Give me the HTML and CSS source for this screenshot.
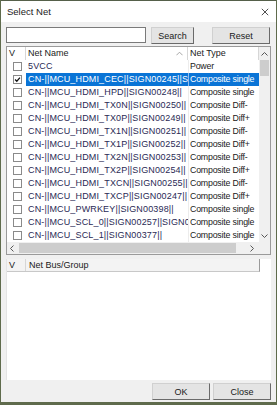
FILE: index.html
```html
<!DOCTYPE html>
<html lang="en">
<head>
    <meta charset="UTF-8">
    <title>Select Net</title>
    <link rel="stylesheet" href="styles.css">
</head>
<body>
    <div class="dialog">
        <div class="titlebar">
            <span class="title">Select Net</span>
            <svg class="close-icon" viewBox="0 0 10 10" fill="none" stroke="#222" stroke-width="1">
                <path d="M1 1L9 9M9 1L1 9"/>
            </svg>
        </div>

        <div class="content">
            <div class="search-row">
                <input class="search-input" type="text">
                <button class="btn btn-search">Search</button>
                <button class="btn btn-wide">Reset</button>
            </div>

            <div class="grid">
                <div class="grid-main">
                    <div class="grid-view">
                        <div class="grid-head">
                            <div class="col-v">V</div>
                            <div class="col-name">Net Name
                                <svg class="sort-icon" viewBox="0 0 8 5" fill="none" stroke="#9a9a9a" stroke-width="1">
                                    <path d="M0.5 4.5L4 1L7.5 4.5"/>
                                </svg>
                            </div>
                            <div class="col-type">Net Type</div>
                        </div>
                        <div class="grid-rows">
                            <div class="row">
                                <div class="col-v"><span class="check"></span></div>
                                <div class="col-name">5VCC</div>
                                <div class="col-type">Power</div>
                            </div>
                            <div class="row selected">
                                <div class="col-v"><span class="check checked">
                                    <svg viewBox="0 0 8 8" fill="none" stroke="#111" stroke-width="1.4"><path d="M1.2 4L3.2 6L6.8 1.8"/></svg>
                                </span></div>
                                <div class="col-name">CN-||MCU_HDMI_CEC||SIGN00245||SIGN00246||</div>
                                <div class="col-type">Composite single</div>
                            </div>
                            <div class="row">
                                <div class="col-v"><span class="check"></span></div>
                                <div class="col-name">CN-||MCU_HDMI_HPD||SIGN00248||</div>
                                <div class="col-type">Composite single</div>
                            </div>
                            <div class="row">
                                <div class="col-v"><span class="check"></span></div>
                                <div class="col-name">CN-||MCU_HDMI_TX0N||SIGN00250||</div>
                                <div class="col-type">Composite Diff-</div>
                            </div>
                            <div class="row">
                                <div class="col-v"><span class="check"></span></div>
                                <div class="col-name">CN-||MCU_HDMI_TX0P||SIGN00249||</div>
                                <div class="col-type">Composite Diff+</div>
                            </div>
                            <div class="row">
                                <div class="col-v"><span class="check"></span></div>
                                <div class="col-name">CN-||MCU_HDMI_TX1N||SIGN00251||</div>
                                <div class="col-type">Composite Diff-</div>
                            </div>
                            <div class="row">
                                <div class="col-v"><span class="check"></span></div>
                                <div class="col-name">CN-||MCU_HDMI_TX1P||SIGN00252||</div>
                                <div class="col-type">Composite Diff+</div>
                            </div>
                            <div class="row">
                                <div class="col-v"><span class="check"></span></div>
                                <div class="col-name">CN-||MCU_HDMI_TX2N||SIGN00253||</div>
                                <div class="col-type">Composite Diff-</div>
                            </div>
                            <div class="row">
                                <div class="col-v"><span class="check"></span></div>
                                <div class="col-name">CN-||MCU_HDMI_TX2P||SIGN00254||</div>
                                <div class="col-type">Composite Diff+</div>
                            </div>
                            <div class="row">
                                <div class="col-v"><span class="check"></span></div>
                                <div class="col-name">CN-||MCU_HDMI_TXCN||SIGN00255||</div>
                                <div class="col-type">Composite Diff-</div>
                            </div>
                            <div class="row">
                                <div class="col-v"><span class="check"></span></div>
                                <div class="col-name">CN-||MCU_HDMI_TXCP||SIGN00247||</div>
                                <div class="col-type">Composite Diff+</div>
                            </div>
                            <div class="row">
                                <div class="col-v"><span class="check"></span></div>
                                <div class="col-name">CN-||MCU_PWRKEY||SIGN00398||</div>
                                <div class="col-type">Composite single</div>
                            </div>
                            <div class="row">
                                <div class="col-v"><span class="check"></span></div>
                                <div class="col-name">CN-||MCU_SCL_0||SIGN00257||SIGN00378||</div>
                                <div class="col-type">Composite single</div>
                            </div>
                            <div class="row">
                                <div class="col-v"><span class="check"></span></div>
                                <div class="col-name">CN-||MCU_SCL_1||SIGN00377||</div>
                                <div class="col-type">Composite single</div>
                            </div>
                        </div>
                    </div>
                    <div class="vscroll">
                        <svg class="arrow" viewBox="0 0 7 4" fill="none" stroke="#555" stroke-width="1"><path d="M0.5 3.5L3.5 0.5L6.5 3.5"/></svg>
                        <div class="vthumb"></div>
                        <div class="spacer"></div>
                        <svg class="arrow" viewBox="0 0 7 4" fill="none" stroke="#555" stroke-width="1"><path d="M0.5 0.5L3.5 3.5L6.5 0.5"/></svg>
                    </div>
                </div>
                <div class="hscroll">
                    <svg class="harrow" viewBox="0 0 4 7" fill="none" stroke="#555" stroke-width="1"><path d="M3.5 0.5L0.5 3.5L3.5 6.5"/></svg>
                    <div class="hthumb"></div>
                    <svg class="harrow" viewBox="0 0 4 7" fill="none" stroke="#555" stroke-width="1"><path d="M0.5 0.5L3.5 3.5L0.5 6.5"/></svg>
                    <div class="corner"></div>
                </div>
            </div>

            <div class="group-list">
                <div class="group-head">
                    <div class="col-v">V</div>
                    <div class="col-group">Net Bus/Group</div>
                </div>
            </div>

            <div class="footer">
                <button class="btn btn-wide">OK</button>
                <button class="btn btn-wide">Close</button>
            </div>
        </div>
    </div>
</body>
</html>
```

FILE: styles.css
```css
* {
    margin: 0;
    padding: 0;
    box-sizing: border-box;
}

body {
    background: #5f6b4c;
    font-family: "Liberation Sans", Arial, sans-serif;
    font-size: 9px;
    color: #1a1a1a;
    width: 277px;
    height: 405px;
    overflow: hidden;
}

.dialog {
    width: 275px;
    height: 402px;
    margin-left: 1px;
    background: #f0f0f0;
    border-top: 1px solid #55604a;
    display: flex;
    flex-direction: column;
}

.titlebar {
    height: 21px;
    background: #ffffff;
    display: flex;
    align-items: center;
    justify-content: space-between;
    padding: 0 7px 0 6px;
}

.title {
    font-size: 9.5px;
    color: #222;
}

.close-icon {
    width: 8px;
    height: 8px;
}

.content {
    padding: 5px 5px 0 5px;
    display: flex;
    flex-direction: column;
}

.search-row {
    display: flex;
    height: 17px;
}

.search-input {
    width: 140px;
    height: 16px;
    border: 1px solid #7a7a7a;
    background: #fff;
    outline: none;
}

.btn {
    height: 17px;
    background: #e4e4e4;
    border: 1px solid;
    border-color: #d0d0d0 #6a6a6a #6a6a6a #d0d0d0;
    font-family: "Liberation Sans", Arial, sans-serif;
    font-size: 9px;
    color: #1a1a1a;
}

.btn-search {
    width: 43px;
    margin-left: 5px;
    margin-right: 18px;
}

.btn-wide {
    width: 58px;
}

.grid {
    margin-top: 2px;
    width: 265px;
    height: 209px;
    border: 1px solid #9a9a9a;
    background: #fff;
    display: flex;
    flex-direction: column;
}

.grid-main {
    display: flex;
    height: 195px;
}

.grid-view {
    width: 252px;
    overflow: hidden;
}

.grid-head,
.row,
.group-head {
    display: flex;
    height: 13px;
    line-height: 13px;
    white-space: nowrap;
}

.grid-head {
    background: #fff;
    color: #222;
}

.grid-head > div,
.group-head > div {
    border-right: 1px solid #d6d6d6;
    padding-left: 2px;
}

.col-v {
    width: 19px;
    flex-shrink: 0;
}

.col-name {
    width: 162px;
    flex-shrink: 0;
    overflow: hidden;
    position: relative;
    padding-left: 2px;
}

.col-type {
    width: 71px;
    flex-shrink: 0;
    overflow: hidden;
    padding-left: 1px;
}

.sort-icon {
    position: absolute;
    right: 4px;
    top: 4px;
    width: 7px;
    height: 5px;
}

.row .col-name {
    color: #2a2a55;
    letter-spacing: 0.15px;
}

.row .col-type {
    border-left: 1px solid #ececec;
    font-size: 8.8px;
    letter-spacing: -0.2px;
}

.row .col-v {
    display: flex;
    align-items: center;
    padding-left: 6px;
}

.check {
    width: 9px;
    height: 9px;
    border: 1px solid #8a8a8a;
    background: #fff;
    display: flex;
    align-items: center;
    justify-content: center;
}

.check svg {
    width: 7px;
    height: 7px;
}

.row.selected .col-name,
.row.selected .col-type {
    background: #0a74d6;
    color: #fff;
}

.row.selected .col-type {
    border-left: 1px solid #8fbdee;
}

.vscroll {
    width: 11px;
    background: #f0f0f0;
    display: flex;
    flex-direction: column;
    align-items: center;
    padding: 5px 0 4px;
}

.arrow {
    width: 7px;
    height: 4px;
}

.vthumb {
    width: 9px;
    height: 16px;
    margin-top: 4px;
    background: #cdcdcd;
}

.spacer {
    flex: 1;
}

.hscroll {
    display: flex;
    align-items: center;
    height: 12px;
    background: #f0f0f0;
}

.harrow {
    width: 4px;
    height: 7px;
    margin: 0 5px 0 3px;
}

.hthumb {
    width: 219px;
    height: 10px;
    background: #cdcdcd;
    margin-right: 11px;
}

.corner {
    width: 11px;
    height: 12px;
    margin-left: auto;
    background: #f0f0f0;
}

.group-list {
    margin-top: 4px;
    width: 265px;
    height: 121px;
    background: #fff;
    border-left: 1px solid #e4e4e4;
}

.group-head {
    width: 253px;
    background: #f3f3f3;
    border-right: 1px solid #9a9a9a;
    border-bottom: 1px solid #c8c8c8;
    height: 13px;
}

.group-head .col-group {
    border-right: none;
    flex: 1;
    padding-left: 3px;
}

.footer {
    display: flex;
    justify-content: flex-end;
    gap: 3px;
    margin-top: 3px;
    padding-right: 0;
}
```
